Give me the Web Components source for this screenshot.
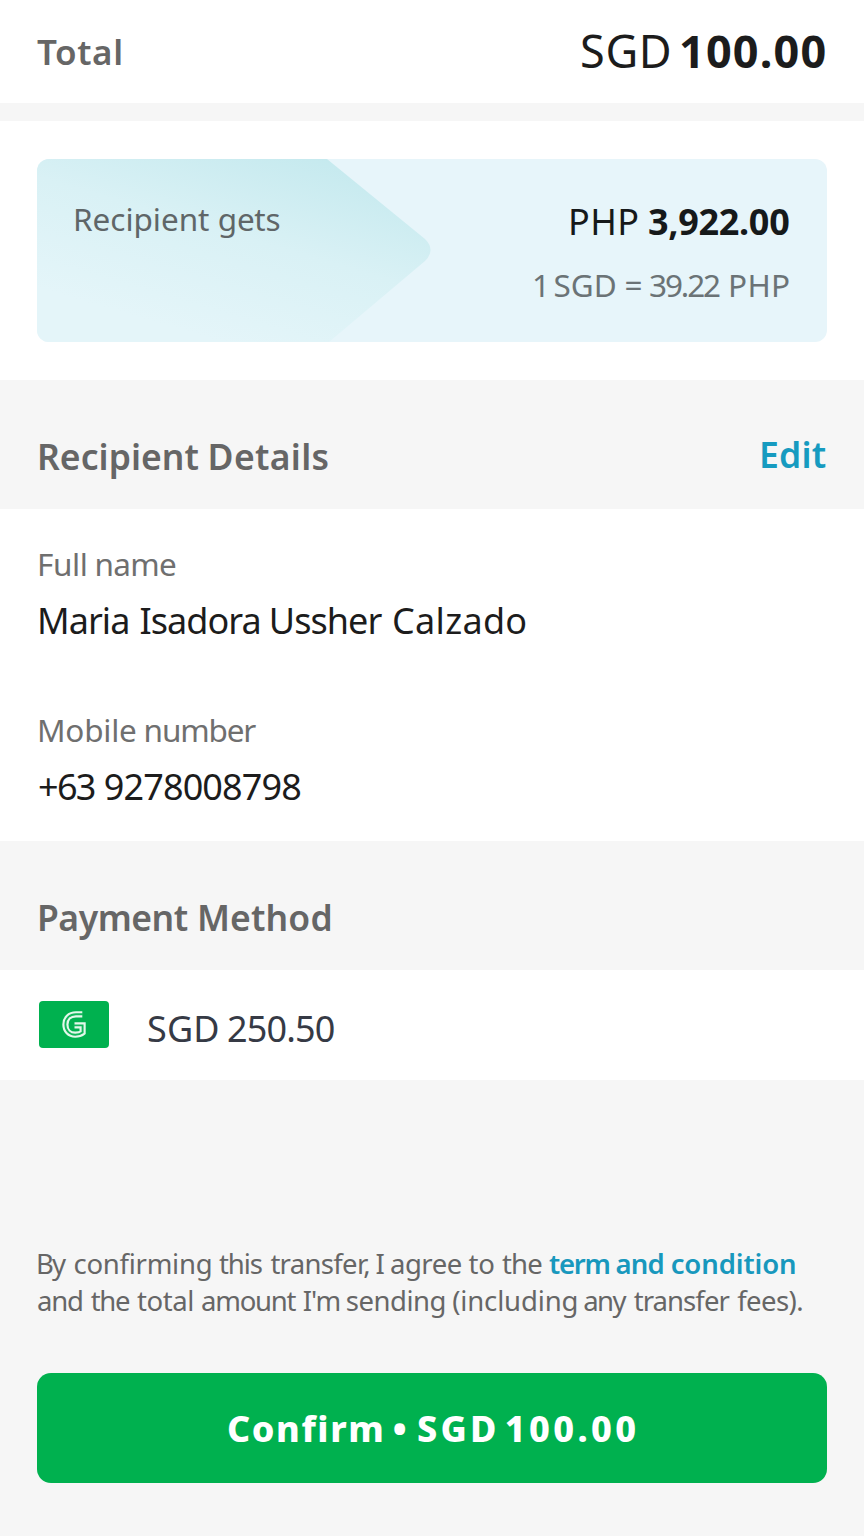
<!DOCTYPE html>
<html lang="en">
<head>
<meta charset="utf-8">
<title>Transfer review</title>
<style>
  html, body { margin: 0; background: #f6f6f6; }
  body { font-family: "Noto Sans", "Open Sans", sans-serif; }
</style>
</head>
<body>
<transfer-review></transfer-review>
<script>
  const ctx = document.createElement('canvas').getContext('2d');

  // A line of text tracked word by word. "marks" holds the start and end of each word,
  // "from" and "to" the edges of the line's box, all on the same horizontal scale.
  class FitText extends HTMLElement {
    connectedCallback() {
      const size = +this.getAttribute('size');
      const weight = this.getAttribute('weight') || 400;
      const words = this.textContent.trim().split(' ');
      const marks = this.getAttribute('marks').split(' ').map(Number);
      const from = +(this.getAttribute('from') || 38);
      const to = +(this.getAttribute('to') || marks[marks.length - 1]);
      ctx.font = `${weight} ${size * 10}px "Noto Sans", "Open Sans", sans-serif`;
      ctx.letterSpacing = '0.01px';
      const space = ctx.measureText(' ').width / 10;
      const runs = words.map((word, i) => {
        const m = ctx.measureText(word);
        const left = m.actualBoundingBoxLeft / 10;
        const ink = left + m.actualBoundingBoxRight / 10;
        const n = word.length;
        const track = n > 1 ? (marks[2 * i + 1] - marks[2 * i] - ink) / (n - 1) : 0;
        const start = marks[2 * i] + left;
        return { word, track, start, end: start + m.width / 10 + n * track };
      });
      const body = runs.map((r, i) => {
        const gap = i ? runs[i].start - runs[i - 1].end - space : 0;
        return (i ? `<span style="letter-spacing:${gap.toFixed(3)}px"> </span>` : '') +
          `<span style="letter-spacing:${r.track.toFixed(3)}px">${r.word}</span>`;
      }).join('');
      this.attachShadow({ mode: 'open' }).innerHTML = `
        <style>
          :host { display: block; flex: none; width: ${to - from}px;
                  font-size: ${size}px; font-weight: ${weight}; }
          div { white-space: pre; margin-left: ${Math.round(runs[0].start - from + 0.1)}px; }
        </style><div>${body}</div>`;
    }
  }
  customElements.define('fit-text', FitText);

  const define = (name, html) => customElements.define(name, class extends HTMLElement {
    constructor() {
      super();
      this.attachShadow({ mode: 'open' }).innerHTML = html;
    }
  });

  define('total-bar', `
    <style>
      :host { display: flex; justify-content: space-between; align-items: flex-start; box-sizing: border-box;
              height: 103px; padding: 20px 38px 0; background: #fff; color: #666; line-height: 61px; }
      .label { margin-top: 1px; }
      .amount { display: flex; color: #1c1c1c; }
    </style>
    <fit-text class="label" size="35" weight="600" marks="37.7 121">Total</fit-text>
    <div class="amount"><fit-text size="45" from="582" to="670" marks="582 669">SGD</fit-text><fit-text size="45" weight="700" from="670" to="826" marks="681.5 825.5">100.00</fit-text></div>`);

  define('rate-card', `
    <style>
      :host { display: block; box-sizing: border-box; height: 259px; margin-top: 18px; padding: 38px 37px 0; background: #fff; }
      .card { display: grid; grid-template-columns: auto auto; justify-content: space-between; align-items: start;
              position: relative; box-sizing: border-box; height: 183px; padding: 39px 38px 0 38px;
              border-radius: 12px; overflow: hidden; background: #e7f5fa; color: #5f6668; }
      svg { position: absolute; left: 0; top: 0; }
      .label { position: relative; line-height: 42px; }
      .sums { display: flex; flex-direction: column; align-items: flex-end; }
      .php { display: flex; color: #16191a; line-height: 48px; }
      .rate { line-height: 48px; margin-top: 15px; color: #6b7376; }
    </style>
    <div class="card">
      <svg width="400" height="183" viewBox="0 0 400 183">
        <defs>
          <linearGradient id="g" gradientUnits="userSpaceOnUse" x1="285" y1="-10" x2="225" y2="195">
            <stop offset="0" stop-color="#c4e9ee"/><stop offset=".5" stop-color="#d9f1f5"/><stop offset="1" stop-color="#e4f5f9"/>
          </linearGradient>
        </defs>
        <path fill="url(#g)" d="M0 0H290L388 80Q399 91 388 102L292 183H0Z"/>
      </svg>
      <fit-text class="label" size="31.5" from="75" marks="76 209 219.3 279.3">Recipient gets</fit-text>
      <div class="sums">
        <div class="php"><fit-text size="36" from="570" to="640" marks="571.3 637.5">PHP</fit-text><fit-text size="36" weight="700" from="640" to="789" marks="649 788.7">3,922.00</fit-text></div>
        <fit-text class="rate" size="31.5" from="535" to="789" marks="534.5 543 555 615 626 639.3 650 719.8 731 788.7">1 SGD = 39.22 PHP</fit-text>
      </div>
    </div>`);

  define('section-head', `
    <style>
      :host { display: flex; justify-content: space-between; align-items: flex-start; box-sizing: border-box; height: 129px;
              padding: 52px 38px 0; background: #f6f6f6; color: #666; line-height: 48px; }
      ::slotted([slot=action]) { color: #169bc0; margin-top: -2px; }
    </style>
    <slot></slot><slot name="action"></slot>`);

  define('detail-field', `
    <style>
      :host { display: flex; flex-direction: column; color: #6f6f6f; line-height: 48px; }
      ::slotted([slot=value]) { color: #1c1c1c; margin-top: 9px; }
    </style>
    <slot></slot><slot name="value"></slot>`);

  define('detail-list', `
    <style>
      :host { display: flex; flex-direction: column; gap: 61px; box-sizing: border-box; height: 332px;
              padding: 31px 38px 0; background: #fff; }
    </style>
    <slot></slot>`);

  define('wallet-badge', `
    <style>
      :host { display: grid; place-items: center; width: 70px; height: 47px; margin-bottom: 2px; border-radius: 4px; background: #00b14f; }
    </style>
    <svg width="24" height="27" viewBox="0 0 24 27" fill="none">
      <path d="M20.3 3.3H14C7.5 3.3 3.4 7.5 3.4 13.5S7.5 23.7 13.2 23.7C16.2 23.7 18.8 23 20.6 21.6V14.4H12.5" stroke="#e3f8eb" stroke-width="6.2"/>
      <path d="M21 3.3H14C7.5 3.3 3.4 7.5 3.4 13.5S7.5 23.7 13.2 23.7C16.2 23.7 18.8 23 20.6 21.6V14.4H11.5" stroke="#12b65b" stroke-width="1.9"/>
    </svg>`);

  define('wallet-row', `
    <style>
      :host { display: flex; align-items: center; gap: 39px; box-sizing: border-box; height: 110px;
              padding: 0 39px; background: #fff; color: #363a45; line-height: 48px; }
      fit-text { margin-top: 8px; }
    </style>
    <wallet-badge></wallet-badge><fit-text size="36" from="148" marks="149 217.7 229 334.2">SGD 250.50</fit-text>`);

  define('terms-note', `
    <style>
      :host { display: flex; flex-direction: column; padding: 165px 38px 0; color: #666; line-height: 37px; }
      .line { display: flex; }
      .link { color: #1898bd; }
    </style>
    <div class="line"><fit-text size="27.5" to="543" marks="38.8 66.5 75 210.5 219.5 262 271 369 376.5 384 391 461 469 494 502.5 541.5">By confirming this transfer, I agree to the</fit-text><fit-text class="link" size="27.5" weight="600" from="543" marks="549.5 609 616.5 663 672 795">term and condition</fit-text></div>
    <fit-text size="27.5" marks="37.8 81.5 91 129 137.3 192.3 201.8 296 303.5 339 347 444 453 576 584 626.5 634 729.5 737 801.7">and the total amount I'm sending (including any transfer fees).</fit-text>`);

  define('confirm-button', `
    <style>
      :host { display: block; padding: 54px 37px 0; }
      button { display: flex; justify-content: center; align-items: center; width: 100%; height: 110px; padding: 1px 0 0;
               border: 0; border-radius: 14px; background: #00b14f; color: #fff; font: inherit; line-height: 48px; text-align: left; }
    </style>
    <button><slot></slot></button>`);

  define('transfer-review', `
    <style>
      :host { display: flex; flex-direction: column; width: 864px; height: 1536px; overflow: hidden; background: #f6f6f6; }
      :host > * { flex: none; }
    </style>
    <total-bar></total-bar>
    <rate-card></rate-card>
    <section-head>
      <fit-text size="35.5" weight="600" marks="39.4 198 210 327.2">Recipient Details</fit-text>
      <fit-text slot="action" size="35.5" weight="600" from="761" to="826" marks="761.9 825.7">Edit</fit-text>
    </section-head>
    <detail-list>
      <detail-field>
        <fit-text size="31.5" marks="39.6 85.3 96.5 175">Full name</fit-text>
        <fit-text slot="value" size="36" marks="39.8 127 140 258.3 271 381.5 393 525">Maria Isadora Ussher Calzado</fit-text>
      </detail-field>
      <detail-field>
        <fit-text size="31.5" marks="39.6 135 145.7 255.7">Mobile number</fit-text>
        <fit-text slot="value" size="36" marks="39.3 94 105 300">+63 9278008798</fit-text>
      </detail-field>
    </detail-list>
    <section-head><fit-text size="35.5" weight="600" marks="39.4 187.3 199.3 330">Payment Method</fit-text></section-head>
    <wallet-row></wallet-row>
    <terms-note></terms-note>
    <confirm-button><fit-text size="36" weight="800" from="228" to="636" marks="228.3 381 393.5 404 417.7 494.3 506 634.5">Confirm • SGD 100.00</fit-text></confirm-button>`);
</script>
</body>
</html>
